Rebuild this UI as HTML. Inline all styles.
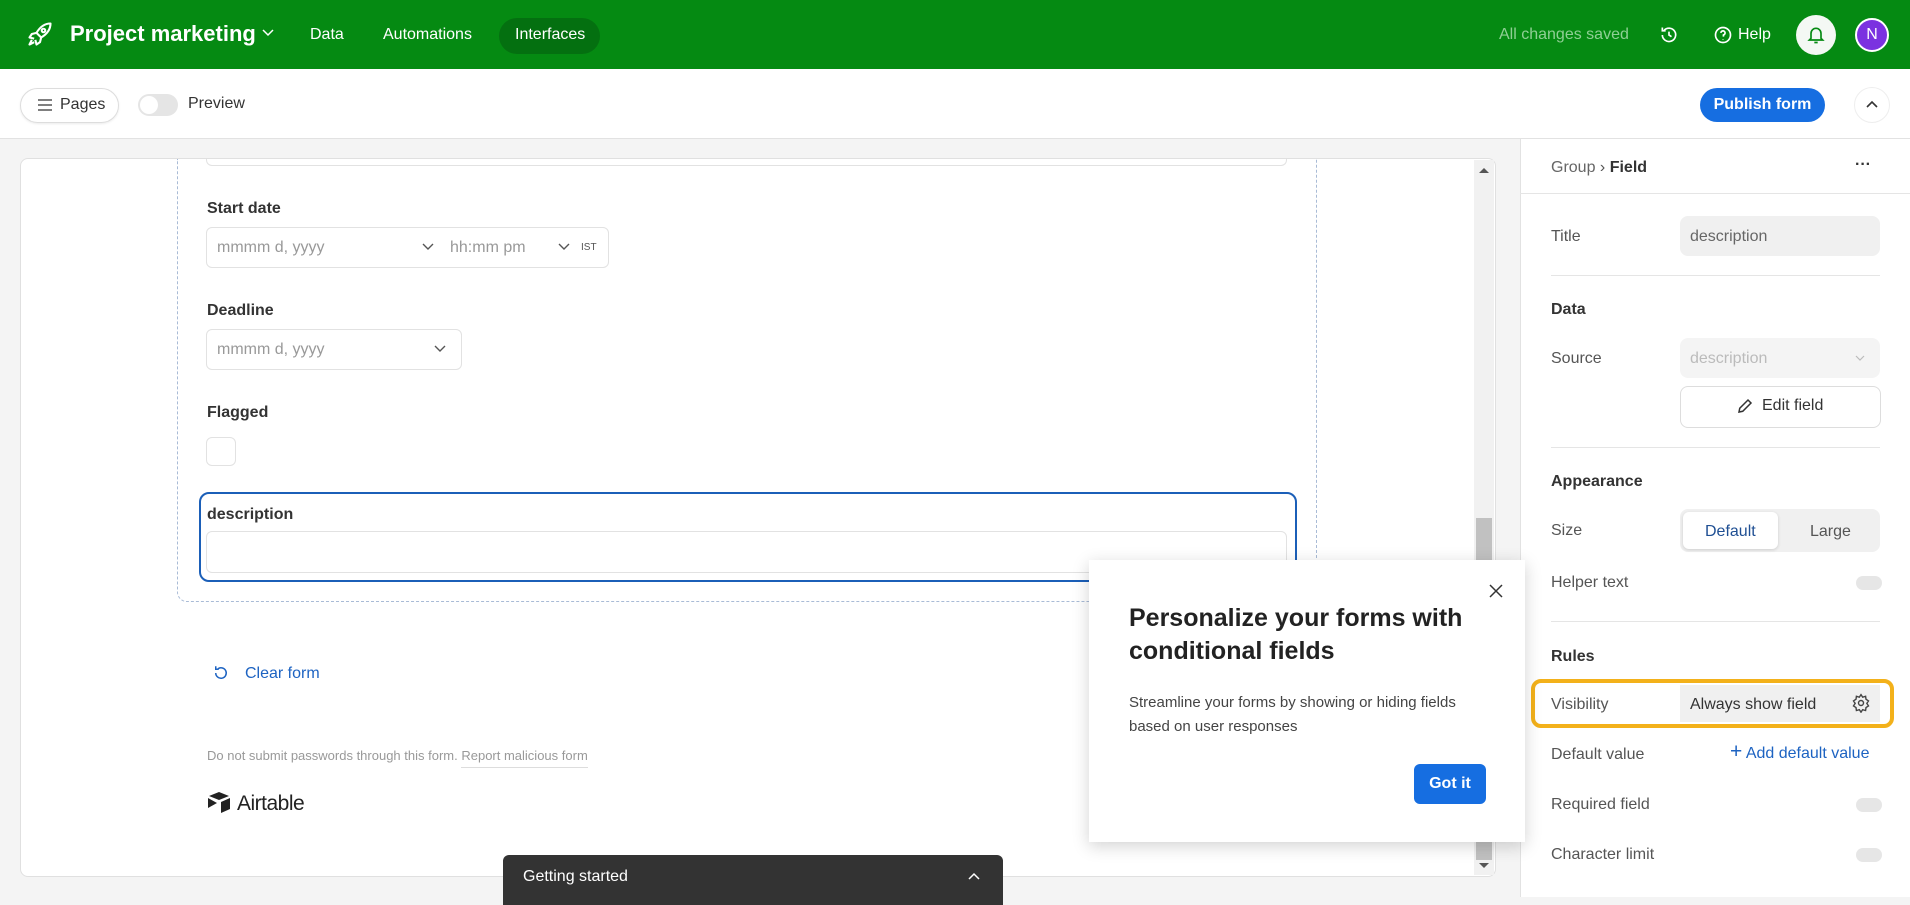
<!DOCTYPE html>
<html><head><meta charset="utf-8"><style>
*{box-sizing:border-box;margin:0;padding:0}
body{width:1910px;height:897px;overflow:hidden;font-family:"Liberation Sans",sans-serif;background:#f4f4f4;position:relative;color:#333}
.a{position:absolute}
.hdr{left:0;top:0;width:1910px;height:69px;background:#058a12}
.w{color:#fff}
.lbl{font-size:16px;color:#555}
.h{font-size:16px;font-weight:bold;color:#333}
.tog{width:26px;height:14px;border-radius:7px;background:#e6e6e6}
.inp{border:1px solid #e2e2e2;border-radius:6px;background:#fff}
.ph{color:#999;font-size:16px}
</style></head><body>
<div class="a hdr"></div>
<svg class="a" style="left:26px;top:20px" width="28" height="28" viewBox="0 0 24 24" fill="none" stroke="#fff" stroke-width="1.8" stroke-linejoin="round"><path d="M21 3c-5 0-9 3-12 8l4 4c5-3 8-7 8-12z"/><path d="M9 11l-4 1-2 3 4 1M13 15l-1 4-3 2-1-4"/><circle cx="15" cy="9" r="1.5"/><path d="M5 17l-2 4 4-2"/></svg>
<div class="a w" style="left:70px;top:21px;font-size:22px;font-weight:bold">Project marketing</div>
<svg class="a" style="left:262px;top:28px" width="12" height="10" viewBox="0 0 12 10"><path d="M1 2l5 5 5-5" stroke="#fff" stroke-width="1.5" fill="none"/></svg>
<div class="a w" style="left:310px;top:26px;font-size:16px">Data</div>
<div class="a w" style="left:383px;top:26px;font-size:16px">Automations</div>
<div class="a" style="left:499px;top:18px;width:101px;height:36px;border-radius:18px;background:#047010"></div>
<div class="a w" style="left:515px;top:26px;font-size:16px">Interfaces</div>
<div class="a" style="left:1499px;top:26px;font-size:16px;color:#8fcf94">All changes saved</div>
<svg class="a" style="left:1659px;top:25px" width="20" height="20" viewBox="0 0 24 24" fill="none" stroke="#fff" stroke-width="2"><path d="M4 12a8 8 0 1 0 2-5.5M4 3v4h4M12 8v4l3 2"/></svg>
<svg class="a" style="left:1713px;top:25px" width="20" height="20" viewBox="0 0 24 24" fill="none" stroke="#fff" stroke-width="2"><circle cx="12" cy="12" r="9"/><path d="M9.5 9.5a2.5 2.5 0 1 1 3 2.5v2M12 17v.5"/></svg>
<div class="a w" style="left:1738px;top:26px;font-size:16px">Help</div>
<div class="a" style="left:1796px;top:15px;width:40px;height:40px;border-radius:50%;background:#f4f8f4"></div>
<svg class="a" style="left:1806px;top:25px" width="20" height="20" viewBox="0 0 24 24" fill="none" stroke="#058a12" stroke-width="2"><path d="M6 16V10a6 6 0 0 1 12 0v6l2 2H4zM10 21h4"/></svg>
<div class="a" style="left:1855px;top:18px;width:34px;height:34px;border-radius:50%;background:#7b32e0;border:2px solid #fff;color:#fff;font-size:16px;text-align:center;line-height:30px">N</div>

<div class="a" style="left:0;top:69px;width:1910px;height:70px;background:#fff;border-bottom:1px solid #e2e2e2"></div>
<div class="a" style="left:20px;top:88px;width:99px;height:35px;border:1px solid #ddd;border-radius:18px;box-shadow:0 1px 2px rgba(0,0,0,.08)"></div>
<svg class="a" style="left:37px;top:98px" width="16" height="14" viewBox="0 0 16 14" stroke="#555" stroke-width="1.6"><path d="M1 2h14M1 7h14M1 12h14"/></svg>
<div class="a" style="left:60px;top:96px;font-size:16px;color:#333">Pages</div>
<div class="a" style="left:138px;top:94px;width:40px;height:22px;border-radius:11px;background:#e5e5e5"></div>
<div class="a" style="left:140px;top:96px;width:18px;height:18px;border-radius:50%;background:#fff"></div>
<div class="a" style="left:188px;top:95px;font-size:16px;color:#333">Preview</div>
<div class="a" style="left:1700px;top:88px;width:125px;height:34px;border-radius:17px;background:#166ee1;color:#fff;font-size:16px;font-weight:bold;text-align:center;line-height:34px">Publish form</div>
<div class="a" style="left:1854px;top:87px;width:36px;height:36px;border-radius:50%;border:1px solid #eee;background:#fff"></div>
<svg class="a" style="left:1865px;top:99px" width="14" height="10" viewBox="0 0 14 10"><path d="M2 8l5-5 5 5" stroke="#333" stroke-width="1.6" fill="none"/></svg>

<div class="a" style="left:20px;top:158px;width:1476px;height:719px;background:#fff;border:1px solid #e0e0e0;border-radius:8px"></div>
<div class="a" style="left:1474px;top:160px;width:20px;height:715px;background:#f1f1f1"></div>
<div class="a" style="left:1476px;top:518px;width:16px;height:342px;background:#c1c1c1"></div>
<svg class="a" style="left:1478px;top:166px" width="12" height="8"><path d="M1 7l5-5 5 5z" fill="#555"/></svg>
<svg class="a" style="left:1478px;top:862px" width="12" height="8"><path d="M1 1l5 5 5-5z" fill="#555"/></svg>

<div class="a" style="left:177px;top:159px;width:1140px;height:443px;border:1px dashed #a9bbd6;border-top:none;border-radius:0 0 10px 10px"></div>
<div class="a" style="left:206px;top:159px;width:1081px;height:7px;border:1px solid #e2e2e2;border-top:none;border-radius:0 0 6px 6px;background:#fff"></div>
<div class="a h" style="left:207px;top:200px">Start date</div>
<div class="a inp" style="left:206px;top:227px;width:403px;height:41px"></div>
<div class="a ph" style="left:217px;top:239px">mmmm d, yyyy</div>
<svg class="a" style="left:421px;top:242px" width="14" height="10"><path d="M2 2l5 5 5-5" stroke="#555" stroke-width="1.4" fill="none"/></svg>
<div class="a ph" style="left:450px;top:239px">hh:mm pm</div>
<svg class="a" style="left:557px;top:242px" width="14" height="10"><path d="M2 2l5 5 5-5" stroke="#555" stroke-width="1.4" fill="none"/></svg>
<div class="a" style="left:581px;top:242px;font-size:10px;color:#555">IST</div>
<div class="a h" style="left:207px;top:302px">Deadline</div>
<div class="a inp" style="left:206px;top:329px;width:256px;height:41px"></div>
<div class="a ph" style="left:217px;top:341px">mmmm d, yyyy</div>
<svg class="a" style="left:433px;top:344px" width="14" height="10"><path d="M2 2l5 5 5-5" stroke="#555" stroke-width="1.4" fill="none"/></svg>
<div class="a h" style="left:207px;top:404px">Flagged</div>
<div class="a inp" style="left:206px;top:437px;width:30px;height:29px"></div>
<div class="a" style="left:199px;top:492px;width:1098px;height:90px;border:2px solid #1b5fb8;border-radius:10px;background:#fff"></div>
<div class="a h" style="left:207px;top:506px">description</div>
<div class="a inp" style="left:206px;top:531px;width:1081px;height:42px"></div>

<svg class="a" style="left:212px;top:664px" width="18" height="18" viewBox="0 0 24 24" fill="none" stroke="#1d63c2" stroke-width="2"><path d="M5 12a7 7 0 1 0 3-5.7M5 3v4h4"/></svg>
<div class="a" style="left:245px;top:665px;font-size:16px;color:#1d63c2">Clear form</div>
<div class="a" style="left:207px;top:748px;font-size:13px;color:#999">Do not submit passwords through this form. <span style="border-bottom:1px solid #ddd;padding-bottom:4px">Report malicious form</span></div>
<svg class="a" style="left:207px;top:791px" width="25" height="23" viewBox="0 0 25 23"><path d="M12 1L2 5l10 4 10-4z" fill="#222"/><path d="M14 11v11l9-4V7z" fill="#222"/><path d="M1 7v10l9-5z" fill="#222"/></svg>
<div class="a" style="left:237px;top:792px;font-size:21px;color:#222;letter-spacing:-0.5px">Airtable</div>

<div class="a" style="left:503px;top:855px;width:500px;height:50px;background:#333;border-radius:6px 6px 0 0"></div>
<div class="a" style="left:523px;top:868px;font-size:16px;color:#fff">Getting started</div>
<svg class="a" style="left:967px;top:871px" width="14" height="10"><path d="M2 8l5-5 5 5" stroke="#fff" stroke-width="1.5" fill="none"/></svg>

<div class="a" style="left:1520px;top:139px;width:390px;height:758px;background:#fff;border-left:1px solid #e2e2e2"></div>
<div class="a" style="left:1551px;top:159px;font-size:16px;color:#666">Group <span style="color:#555">›</span> <b style="color:#333">Field</b></div>
<div class="a" style="left:1855px;top:156px;font-size:16px;font-weight:bold;color:#333">···</div>
<div class="a" style="left:1520px;top:193px;width:390px;height:1px;background:#e5e5e5"></div>
<div class="a lbl" style="left:1551px;top:228px">Title</div>
<div class="a" style="left:1680px;top:216px;width:200px;height:40px;border-radius:8px;background:#f0f0f0"></div>
<div class="a" style="left:1690px;top:228px;font-size:16px;color:#666">description</div>
<div class="a" style="left:1551px;top:275px;width:329px;height:1px;background:#e5e5e5"></div>
<div class="a h" style="left:1551px;top:301px">Data</div>
<div class="a lbl" style="left:1551px;top:350px">Source</div>
<div class="a" style="left:1680px;top:338px;width:200px;height:40px;border-radius:8px;background:#f4f4f4"></div>
<div class="a" style="left:1690px;top:350px;font-size:16px;color:#bbb">description</div>
<svg class="a" style="left:1854px;top:354px" width="12" height="8"><path d="M2 2l4 4 4-4" stroke="#bbb" stroke-width="1.2" fill="none"/></svg>
<div class="a" style="left:1680px;top:386px;width:201px;height:42px;border:1px solid #ddd;border-radius:8px"></div>
<svg class="a" style="left:1736px;top:397px" width="18" height="18" viewBox="0 0 24 24" fill="none" stroke="#333" stroke-width="2"><path d="M4 20l1-5L16 4l4 4L9 19z"/></svg>
<div class="a" style="left:1762px;top:397px;font-size:16px;color:#333">Edit field</div>
<div class="a" style="left:1551px;top:447px;width:329px;height:1px;background:#e5e5e5"></div>
<div class="a h" style="left:1551px;top:473px">Appearance</div>
<div class="a lbl" style="left:1551px;top:522px">Size</div>
<div class="a" style="left:1680px;top:509px;width:200px;height:43px;border-radius:8px;background:#f0f0f0"></div>
<div class="a" style="left:1683px;top:512px;width:95px;height:37px;border-radius:6px;background:#fff;box-shadow:0 1px 3px rgba(0,0,0,.15)"></div>
<div class="a" style="left:1705px;top:523px;font-size:16px;color:#1f4f93">Default</div>
<div class="a" style="left:1810px;top:523px;font-size:16px;color:#555">Large</div>
<div class="a lbl" style="left:1551px;top:574px">Helper text</div>
<div class="a tog" style="left:1856px;top:576px"></div>
<div class="a" style="left:1551px;top:621px;width:329px;height:1px;background:#e5e5e5"></div>
<div class="a h" style="left:1551px;top:648px">Rules</div>
<div class="a" style="left:1531px;top:679px;width:363px;height:49px;border:4px solid #f3b11a;border-radius:10px"></div>
<div class="a" style="left:1680px;top:685px;width:200px;height:37px;background:#f0f0f0"></div>
<div class="a lbl" style="left:1551px;top:696px">Visibility</div>
<div class="a" style="left:1690px;top:696px;font-size:16px;color:#333">Always show field</div>
<svg class="a" style="left:1851px;top:693px" width="20" height="20" viewBox="0 0 24 24" fill="none" stroke="#444" stroke-width="1.7"><circle cx="12" cy="12" r="3"/><path d="M12 2l2 3 3.5-1 .5 3.5 3 2-2 3 2 3-3 2-.5 3.5-3.5-1-2 3-2-3-3.5 1-.5-3.5-3-2 2-3-2-3 3-2 .5-3.5 3.5 1z"/></svg>
<div class="a lbl" style="left:1551px;top:746px">Default value</div>
<div class="a" style="left:1730px;top:744px;font-size:16px;color:#1d63c2"><span style="font-size:21px;line-height:16px">+</span> Add default value</div>
<div class="a lbl" style="left:1551px;top:796px">Required field</div>
<div class="a tog" style="left:1856px;top:798px"></div>
<div class="a lbl" style="left:1551px;top:846px">Character limit</div>
<div class="a tog" style="left:1856px;top:848px"></div>

<div class="a" style="left:1089px;top:560px;width:436px;height:282px;background:#fff;box-shadow:0 4px 16px rgba(0,0,0,.18)"></div>
<svg class="a" style="left:1489px;top:584px" width="14" height="14"><path d="M1 1l12 12M13 1L1 13" stroke="#333" stroke-width="1.5"/></svg>
<div class="a" style="left:1129px;top:602px;width:370px;font-size:25px;line-height:33px;font-weight:bold;color:#222">Personalize your forms with conditional fields</div>
<div class="a" style="left:1129px;top:691px;width:370px;font-size:15px;line-height:24px;color:#444">Streamline your forms by showing or hiding fields based on user responses</div>
<div class="a" style="left:1414px;top:764px;width:72px;height:40px;border-radius:6px;background:#166ee1;color:#fff;font-size:16px;font-weight:bold;text-align:center;line-height:40px">Got it</div>
</body></html>
